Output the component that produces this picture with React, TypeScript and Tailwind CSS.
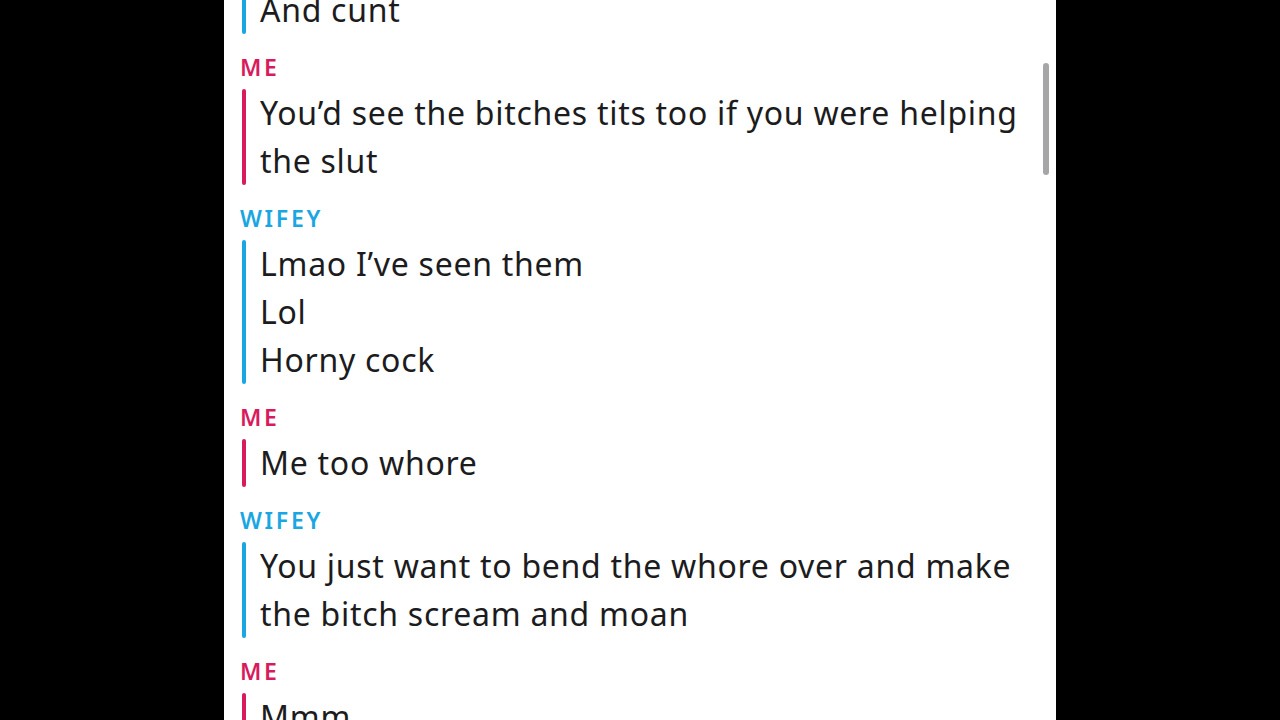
import React from "react";

type Msg = { who: "ME" | "WIFEY"; lines: string[] };

const msgs: Msg[] = [
  { who: "ME", lines: ["You\u2019d see the bitches tits too if you were helping", "the slut"] },
  { who: "WIFEY", lines: ["Lmao I\u2019ve seen them", "Lol", "Horny cock"] },
  { who: "ME", lines: ["Me too whore"] },
  { who: "WIFEY", lines: ["You just want to bend the whore over and make", "the bitch scream and moan"] },
  { who: "ME", lines: ["Mmm"] },
];

function Bar({ who }: { who: "ME" | "WIFEY" }) {
  return (
    <div
      className={
        who === "ME"
          ? "w-[4px] shrink-0 rounded-full bg-[#d81b5c] ml-[2px]"
          : "w-[4px] shrink-0 rounded-full bg-[#1aa6e2] ml-[2px]"
      }
    />
  );
}

function Lines({ lines }: { lines: string[] }) {
  return (
    <div className="ml-[14px] flex flex-col">
      {lines.map((l, i) => (
        <div key={i} className="text-[32px] leading-[48px] text-[#1c1c1e] tracking-[0.72px] whitespace-nowrap">
          {l}
        </div>
      ))}
    </div>
  );
}

export default function App() {
  return (
    <div
      className="w-full h-[720px] bg-black flex justify-center overflow-hidden"
      style={{ fontFamily: "'Noto Sans', Lato, sans-serif" }}
    >
      <div className="w-[832px] h-[720px] bg-white relative overflow-hidden">
        <div className="pl-4 flex flex-col mt-[-14px]">
          <div className="flex">
            <Bar who="WIFEY" />
            <Lines lines={["And cunt"]} />
          </div>
          {msgs.map((m, i) => (
            <div key={i} className="flex flex-col mt-[21px]">
              <div
                className={
                  m.who === "ME"
                    ? "text-[23px] leading-[24px] font-semibold tracking-[2.7px] text-[#d81b5c] mb-[10px]"
                    : "text-[23px] leading-[24px] font-semibold tracking-[2.7px] text-[#1aa6e2] mb-[10px]"
                }
              >
                {m.who}
              </div>
              <div className="flex">
                <Bar who={m.who} />
                <Lines lines={m.lines} />
              </div>
            </div>
          ))}
        </div>
        <div className="absolute left-[819px] top-[63px] w-[6px] h-[112px] rounded-full bg-[#a6a6a8]" />
      </div>
    </div>
  );
}
